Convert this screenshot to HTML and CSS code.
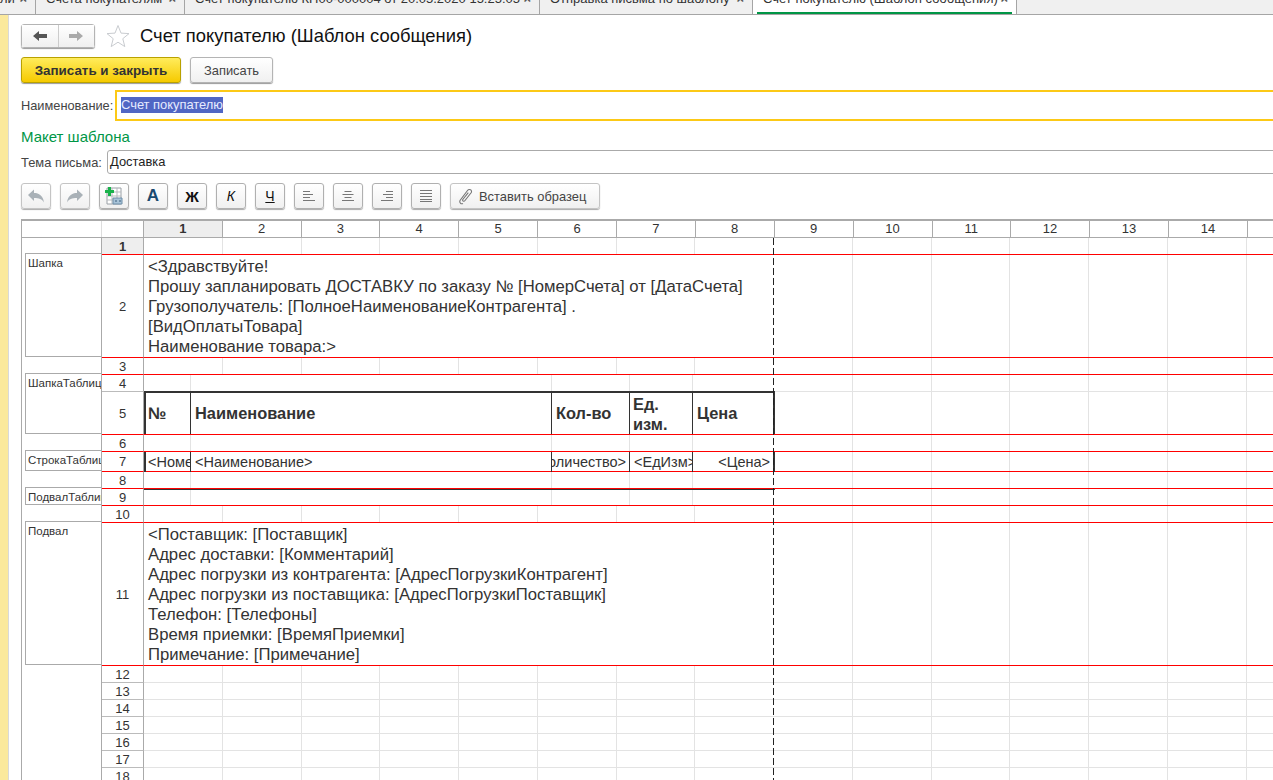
FILE: index.html
```html
<!DOCTYPE html>
<html lang="ru">
<head>
    <meta charset="UTF-8">
    <meta name="viewport" content="width=device-width, initial-scale=1.0">
    <title>Счет покупателю (Шаблон сообщения)</title>
    <link rel="stylesheet" href="styles.css">
</head>
<body>
    <div class="tabs">
        <div class="tab tab-first"><span>ли</span><b>×</b></div>
        <div class="tab tab-2"><span>Счета покупателям</span><b>×</b></div>
        <div class="tab tab-3"><span>Счет покупателю КП00-000004 от 20.05.2020 15:25:05</span><b>×</b></div>
        <div class="tab tab-4"><span>Отправка письма по шаблону</span><b>×</b></div>
        <div class="tab tab-5 tab-active"><span>Счет покупателю (Шаблон сообщения)</span><b>×</b></div>
    </div>

    <div class="layout">
        <div class="strip"></div>
        <div class="main">
            <div class="title-row">
                <div class="nav">
                    <button class="nav-btn">
                        <svg width="16" height="12" viewBox="0 0 16 12"><path d="M1 6 7 1v3h8v4H7v3z" fill="#555"/></svg>
                    </button>
                    <button class="nav-btn">
                        <svg width="16" height="12" viewBox="0 0 16 12"><path d="M15 6 9 1v3H1v4h8v3z" fill="#aaa"/></svg>
                    </button>
                </div>
                <svg class="star" width="24" height="24" viewBox="0 0 24 24"><path d="M12 1.500l3 7.600 8 .5-6.200 5.100 2 7.900-6.800-4.400-6.800 4.400 2-7.900L1 9.600l8-.5z" fill="#fff" stroke="#c9ccd0"/></svg>
                <h1>Счет покупателю (Шаблон сообщения)</h1>
            </div>

            <div class="actions">
                <button class="btn-save-close">Записать и закрыть</button>
                <button class="btn-save">Записать</button>
            </div>

            <div class="name-row">
                <label>Наименование:</label>
                <div class="name-field"><span class="selected">Счет покупателю</span></div>
            </div>

            <div class="section-title">Макет шаблона</div>

            <div class="subject-row">
                <label>Тема письма:</label>
                <div class="subject-field">Доставка</div>
            </div>

            <div class="toolbar">
                <button class="tool">
                    <svg width="18" height="14" viewBox="0 0 18 14"><path d="M1 6 7 .5v3.500c5 0 9 2.500 10 9.500-2-3.500-5-4.500-10-4.500v3z" fill="#a9b1b7"/></svg>
                </button>
                <button class="tool">
                    <svg width="18" height="14" viewBox="0 0 18 14"><path d="M17 6 11 .5v3.500c-5 0-9 2.500-10 9.500 2-3.500 5-4.500 10-4.500v3z" fill="#a9b1b7"/></svg>
                </button>
                <button class="tool tool-dark">
                    <svg width="20" height="20" viewBox="0 0 20 20">
                        <path d="M3 2h14v16H3z" fill="#fff" stroke="#9aa0a6"/>
                        <path d="M3 6h14M3 10h14M3 14h14M8 2v16M13 2v16" stroke="#b5b9bd" fill="none"/>
                        <path d="M9 12h9v6H9z" fill="#a8c3d8" stroke="#6f8ea8"/>
                        <path d="M11 15h2M15 15h2" stroke="#3d5f7d" fill="none"/>
                        <path d="M4 1h3v3h3v3H7v3H4V7H1V4h3z" fill="#19b24b"/>
                    </svg>
                </button>
                <button class="tool tool-dark tool-a">A</button>
                <button class="tool tool-dark tool-b">Ж</button>
                <button class="tool tool-dark tool-i">К</button>
                <button class="tool tool-dark tool-u">Ч</button>
                <button class="tool tool-dark">
                    <svg width="16" height="14" viewBox="0 0 16 14"><path d="M2 2.500h7M2 5.500h10M2 8.500h7M2 11.500h12" stroke="#777" fill="none"/></svg>
                </button>
                <button class="tool tool-dark">
                    <svg width="16" height="14" viewBox="0 0 16 14"><path d="M4.500 2.500h7M2.500 5.500h11M4.500 8.500h7M2 11.500h12" stroke="#777" fill="none"/></svg>
                </button>
                <button class="tool tool-dark">
                    <svg width="16" height="14" viewBox="0 0 16 14"><path d="M7 2.500h7M4 5.500h10M7 8.500h7M2 11.500h12" stroke="#777" fill="none"/></svg>
                </button>
                <button class="tool tool-dark">
                    <svg width="16" height="14" viewBox="0 0 16 14"><path d="M2 1.500h12M2 4.500h12M2 7.500h12M2 10.500h12M2 12.500h12" stroke="#777" fill="none"/></svg>
                </button>
                <button class="tool-text">
                    <svg width="18" height="18" viewBox="0 0 18 18"><path d="M6 16.500c-2 1-4-1-3-3L10.500 3.500c1.500-2 5-.5 3.800 2L8 13.500c-1 1.500-3 .5-2.200-1l5.500-6.800" fill="none" stroke="#777" stroke-width="1.100"/></svg>
                    Вставить образец
                </button>
            </div>

            <div class="sheet">
                <div class="col-heads">
                    <div class="corner"></div>
                    <div class="corner corner-rows"></div>
                    <div class="col-head col-active c78">1</div>
                    <div class="col-head c79">2</div>
                    <div class="col-head c78">3</div>
                    <div class="col-head c79">4</div>
                    <div class="col-head c79">5</div>
                    <div class="col-head c79">6</div>
                    <div class="col-head c78">7</div>
                    <div class="col-head c79">8</div>
                    <div class="col-head c79">9</div>
                    <div class="col-head c79">10</div>
                    <div class="col-head c78">11</div>
                    <div class="col-head c79">12</div>
                    <div class="col-head c79">13</div>
                    <div class="col-head c79">14</div>
                    <div class="col-head c79"></div>
                </div>

                <div class="sheet-body">
                    <div class="groups">
                        <div class="group group-head">Шапка</div>
                        <div class="group group-thead">ШапкаТаблицы</div>
                        <div class="group group-trow">СтрокаТаблицы</div>
                        <div class="group group-tfoot">ПодвалТаблицы</div>
                        <div class="group group-foot">Подвал</div>
                    </div>

                    <div class="rows">
                        <div class="row red h17">
                            <div class="row-head row-active">1</div>
                            <div class="cells plain"></div>
                        </div>
                        <div class="row red h103">
                            <div class="row-head">2</div>
                            <div class="cells merged">
                                <div class="text-block">&lt;Здравствуйте!<br>Прошу запланировать ДОСТАВКУ по заказу № [НомерСчета] от [ДатаСчета]<br>Грузополучатель: [ПолноеНаименованиеКонтрагента] .<br>[ВидОплатыТовара]<br>Наименование товара:&gt;</div>
                            </div>
                        </div>
                        <div class="row red h17">
                            <div class="row-head">3</div>
                            <div class="cells plain"></div>
                        </div>
                        <div class="row h17">
                            <div class="row-head">4</div>
                            <div class="cells table-cols"></div>
                        </div>
                        <div class="row red h43">
                            <div class="row-head">5</div>
                            <div class="cells right-only">
                                <div class="t-row t-row-head">
                                    <div class="t-cell">№</div>
                                    <div class="t-cell">Наименование</div>
                                    <div class="t-cell">Кол-во</div>
                                    <div class="t-cell t-wrap">Ед.<br>изм.</div>
                                    <div class="t-cell">Цена</div>
                                </div>
                            </div>
                        </div>
                        <div class="row red h17">
                            <div class="row-head">6</div>
                            <div class="cells table-cols"></div>
                        </div>
                        <div class="row red h20">
                            <div class="row-head">7</div>
                            <div class="cells right-only">
                                <div class="t-row t-row-body">
                                    <div class="t-cell"><span>&lt;НомерСтроки&gt;</span></div>
                                    <div class="t-cell"><span>&lt;Наименование&gt;</span></div>
                                    <div class="t-cell t-right"><span>&lt;Количество&gt;</span></div>
                                    <div class="t-cell"><span>&lt;ЕдИзм&gt;</span></div>
                                    <div class="t-cell t-right"><span>&lt;Цена&gt;</span></div>
                                </div>
                            </div>
                        </div>
                        <div class="row red h17">
                            <div class="row-head">8</div>
                            <div class="cells table-cols"></div>
                        </div>
                        <div class="row red h17">
                            <div class="row-head">9</div>
                            <div class="cells table-cols"><div class="t-end"></div></div>
                        </div>
                        <div class="row red h17">
                            <div class="row-head">10</div>
                            <div class="cells plain"></div>
                        </div>
                        <div class="row red h143">
                            <div class="row-head">11</div>
                            <div class="cells merged">
                                <div class="text-block">&lt;Поставщик: [Поставщик]<br>Адрес доставки: [Комментарий]<br>Адрес погрузки из контрагента: [АдресПогрузкиКонтрагент]<br>Адрес погрузки из поставщика: [АдресПогрузкиПоставщик]<br>Телефон: [Телефоны]<br>Время приемки: [ВремяПриемки]<br>Примечание: [Примечание]</div>
                            </div>
                        </div>
                        <div class="row h17"><div class="row-head">12</div><div class="cells plain"></div></div>
                        <div class="row h17"><div class="row-head">13</div><div class="cells plain"></div></div>
                        <div class="row h17"><div class="row-head">14</div><div class="cells plain"></div></div>
                        <div class="row h17"><div class="row-head">15</div><div class="cells plain"></div></div>
                        <div class="row h17"><div class="row-head">16</div><div class="cells plain"></div></div>
                        <div class="row h17"><div class="row-head">17</div><div class="cells plain"></div></div>
                        <div class="row h17"><div class="row-head">18</div><div class="cells plain"></div></div>
                    </div>

                    <div class="page-break"></div>
                </div>
            </div>
        </div>
    </div>
</body>
</html>
```

FILE: styles.css
```css
* {
    box-sizing: border-box;
}

body {
    margin: 0;
    height: 100vh;
    overflow: hidden;
    background-color: white;
    color: #333;
    font-family: "Liberation Sans", Arial, sans-serif;
    font-size: 12.900px;
}

button {
    font-family: inherit;
    padding: 0;
    cursor: pointer;
}

/* tabs */
.tabs {
    display: flex;
    height: 15px;
    background-color: #f0f0f0;
    border-bottom: 1px solid #a5a5a5;
    overflow: hidden;
}

.tab {
    position: relative;
    display: flex;
    align-items: flex-end;
    justify-content: space-between;
    height: 14px;
    padding: 0 8px 7px 10px;
    border-right: 1px solid #a5a5a5;
    font-size: 13px;
    line-height: 16px;
    white-space: nowrap;
    color: #333;
}

.tab b {
    font-size: 13px;
    color: #555;
}

.tab-first {
    width: 36px;
    padding-left: 0;
    padding-right: 8px;
}

.tab-2 {
    width: 149px;
}

.tab-3 {
    width: 355px;
}

.tab-4 {
    width: 213px;
}

.tab-5 {
    width: 264px;
}

.tab-active {
    background-color: white;
}

.tab-active::after {
    content: "";
    position: absolute;
    left: 4px;
    right: 4px;
    bottom: 0;
    height: 2px;
    background-color: #009646;
}

/* page */
.layout {
    display: flex;
    height: 765px;
}

.strip {
    flex: 0 0 9px;
    background-color: #fbe99c;
    border-right: 1px solid #d9d9d9;
}

.main {
    flex: 1;
    min-width: 0;
    padding: 9px 0 0 12px;
    overflow: hidden;
}

.title-row {
    display: flex;
    align-items: center;
    height: 24px;
}

.nav {
    display: flex;
    width: 74px;
    height: 24px;
    border: 1px solid #b4b4b4;
    border-radius: 3px;
    box-shadow: 0 1px 1px #999;
}

.nav-btn {
    flex: 1;
    border: none;
    background: linear-gradient(white, #f0f0f0);
    display: flex;
    align-items: center;
    justify-content: center;
}

.nav-btn + .nav-btn {
    border-left: 1px solid #ccc;
}

.star {
    margin-left: 11px;
}

h1 {
    margin: 0 0 0 10px;
    font-size: 18.400px;
    font-weight: normal;
    color: #111;
}

.actions {
    display: flex;
    gap: 9px;
    margin-top: 9px;
}

.btn-save-close {
    width: 160px;
    height: 26px;
    border: 1px solid #b9a100;
    border-radius: 3px;
    background: linear-gradient(#ffec5c, #f6ca00);
    box-shadow: 0 1px 1px #999;
    font-size: 13.400px;
    font-weight: bold;
    color: #333;
}

.btn-save {
    width: 83px;
    height: 26px;
    border: 1px solid #b4b4b4;
    border-radius: 3px;
    background: linear-gradient(white, #f0f0f0);
    box-shadow: 0 1px 1px #999;
    font-size: 12.900px;
    color: #444;
}

.name-row {
    display: flex;
    align-items: center;
    margin-top: 7px;
}

.name-row label {
    width: 94px;
    font-size: 12.800px;
    color: #444;
}

.name-field {
    flex: 1;
    height: 31px;
    margin-right: -6px;
    padding: 5px 4px;
    border: 2px solid #fcc916;
}

.selected {
    display: inline-block;
    height: 16px;
    line-height: 16px;
    background-color: #5066c4;
    color: #e6ebff;
}

.section-title {
    margin-top: 7px;
    height: 18px;
    line-height: 18px;
    font-size: 15px;
    color: #009646;
}

.subject-row {
    display: flex;
    align-items: center;
    margin-top: 4px;
}

.subject-row label {
    width: 86px;
    color: #444;
}

.subject-field {
    flex: 1;
    height: 24px;
    margin-right: -6px;
    padding-left: 2px;
    line-height: 22px;
    border: 1px solid #aaa;
    border-radius: 3px;
    color: #222;
}

/* toolbar */
.toolbar {
    display: flex;
    gap: 9px;
    margin-top: 9px;
}

.tool,
.tool-text {
    display: flex;
    align-items: center;
    justify-content: center;
    width: 30px;
    height: 26px;
    border: 1px solid #c4c4c4;
    border-radius: 3px;
    background: linear-gradient(white, #f0f0f0);
    box-shadow: 0 1px 1px #aaa;
}

.tool-dark {
    border-color: #b0b0b0;
}

.tool-a {
    font-size: 17px;
    font-weight: bold;
    color: #1a4a70;
}

.tool-b {
    font-size: 15px;
    font-weight: bold;
    color: #111;
}

.tool-i {
    font-size: 14px;
    font-style: italic;
    color: #111;
}

.tool-u {
    font-size: 14px;
    text-decoration: underline;
    color: #111;
}

.tool-text {
    width: 150px;
    gap: 4px;
    justify-content: flex-start;
    padding-left: 6px;
    font-size: 12.900px;
    color: #444;
}

/* sheet */
.sheet {
    margin-top: 10px;
    width: 1300px;
    border-left: 1px solid #aaa;
    --line: #e3e3e3;
    --cols-left:
        linear-gradient(var(--line), var(--line)) 78px 0 / 1px 100% no-repeat,
        linear-gradient(var(--line), var(--line)) 157px 0 / 1px 100% no-repeat,
        linear-gradient(var(--line), var(--line)) 235px 0 / 1px 100% no-repeat,
        linear-gradient(var(--line), var(--line)) 314px 0 / 1px 100% no-repeat,
        linear-gradient(var(--line), var(--line)) 393px 0 / 1px 100% no-repeat,
        linear-gradient(var(--line), var(--line)) 472px 0 / 1px 100% no-repeat,
        linear-gradient(var(--line), var(--line)) 550px 0 / 1px 100% no-repeat;
    --cols-table:
        linear-gradient(var(--line), var(--line)) 46px 0 / 1px 100% no-repeat,
        linear-gradient(var(--line), var(--line)) 407px 0 / 1px 100% no-repeat,
        linear-gradient(var(--line), var(--line)) 485px 0 / 1px 100% no-repeat,
        linear-gradient(var(--line), var(--line)) 548px 0 / 1px 100% no-repeat;
    --cols-right:
        linear-gradient(var(--line), var(--line)) 708px 0 / 1px 100% no-repeat,
        linear-gradient(var(--line), var(--line)) 787px 0 / 1px 100% no-repeat,
        linear-gradient(var(--line), var(--line)) 865px 0 / 1px 100% no-repeat,
        linear-gradient(var(--line), var(--line)) 944px 0 / 1px 100% no-repeat,
        linear-gradient(var(--line), var(--line)) 1023px 0 / 1px 100% no-repeat,
        linear-gradient(var(--line), var(--line)) 1102px 0 / 1px 100% no-repeat;
}

.col-heads {
    display: flex;
    height: 19px;
    border-top: 2px solid #aaa;
    border-bottom: 1px solid #aaa;
}

.corner {
    flex: 0 0 79px;
}

.corner-rows {
    flex: 0 0 43px;
    border-left: 1px solid #ddd;
    border-right: 1px solid #aaa;
}

.col-head {
    flex: none;
    border-right: 1px solid #aaa;
    text-align: center;
    line-height: 15px;
    font-size: 13px;
}

.c78 {
    width: 78.500px;
}

.c79 {
    width: 79px;
}

.col-active {
    background-color: #eee;
    font-weight: bold;
}

.sheet-body {
    position: relative;
    display: flex;
}

.groups {
    display: flex;
    flex-direction: column;
    gap: 16px;
    flex: none;
    width: 79px;
    padding: 15px 0 0 3px;
}

.group {
    border: 1px solid #aaa;
    border-right: none;
    padding: 3px 0 0 2px;
    font-size: 11.500px;
    line-height: 12px;
    white-space: nowrap;
    overflow: hidden;
}

.group-head {
    height: 104px;
}

.group-thead {
    height: 61px;
}

.group-trow {
    height: 21px;
}

.group-tfoot {
    height: 18px;
}

.group-foot {
    height: 144px;
}

.rows {
    flex: 1;
    min-width: 0;
    border-left: 1px solid #aaa;
}

.row {
    display: flex;
}

.h17 {
    height: 17px;
}

.h20 {
    height: 20px;
}

.h43 {
    height: 43px;
}

.h103 {
    height: 103px;
}

.h143 {
    height: 143px;
}

.row-head {
    display: flex;
    align-items: center;
    justify-content: center;
    flex: 0 0 42px;
    border-right: 1px solid #aaa;
    border-bottom: 1px solid #bbb;
    font-size: 13px;
}

.row-active {
    background-color: #eee;
    font-weight: bold;
}

.cells {
    flex: 1;
    border-bottom: 1px solid var(--line);
}

.row.red .row-head,
.row.red .cells {
    border-bottom-color: #f00;
}

.plain {
    background: var(--cols-right), var(--cols-left);
}

.table-cols {
    background: var(--cols-right), var(--cols-table);
}

.merged,
.right-only {
    background: var(--cols-right);
}

.text-block {
    padding: 2px 0 0 4px;
    font-size: 16.700px;
    line-height: 20px;
    white-space: nowrap;
}

/* table template */
.t-row {
    display: grid;
    grid-template-columns: 47px 361px 78px 63px 82px;
    width: 631px;
}

.t-row-head {
    height: 43px;
    margin-top: -1px;
    border-top: 2px solid #333;
    font-size: 16.400px;
    font-weight: bold;
}

.t-row-body {
    height: 20px;
    font-size: 14.500px;
}

.t-cell {
    display: flex;
    align-items: center;
    padding-left: 4px;
    border-right: 1px solid #333;
    white-space: nowrap;
    overflow: hidden;
}

.t-row-head .t-cell {
    height: 41px;
}

.t-row-body .t-cell {
    height: 20px;
    padding-left: 4px;
}

.t-cell:first-child {
    border-left: 2px solid #333;
    padding-left: 2px;
}

.t-row-body .t-cell:first-child {
    padding-left: 2px;
}

.t-cell:last-child {
    border-right: 2px solid #333;
}

.t-row-head .t-wrap {
    line-height: 20px;
    padding-left: 3px;
}

.t-row-body .t-right {
    justify-content: flex-end;
    padding-left: 0;
    padding-right: 3px;
}

.t-end {
    width: 631px;
    height: 1px;
    background-color: #333;
}

.page-break {
    position: absolute;
    top: 0;
    bottom: 0;
    left: 751px;
    width: 1px;
    background: repeating-linear-gradient(#222 0 7px, transparent 7px 10px);
}
```
